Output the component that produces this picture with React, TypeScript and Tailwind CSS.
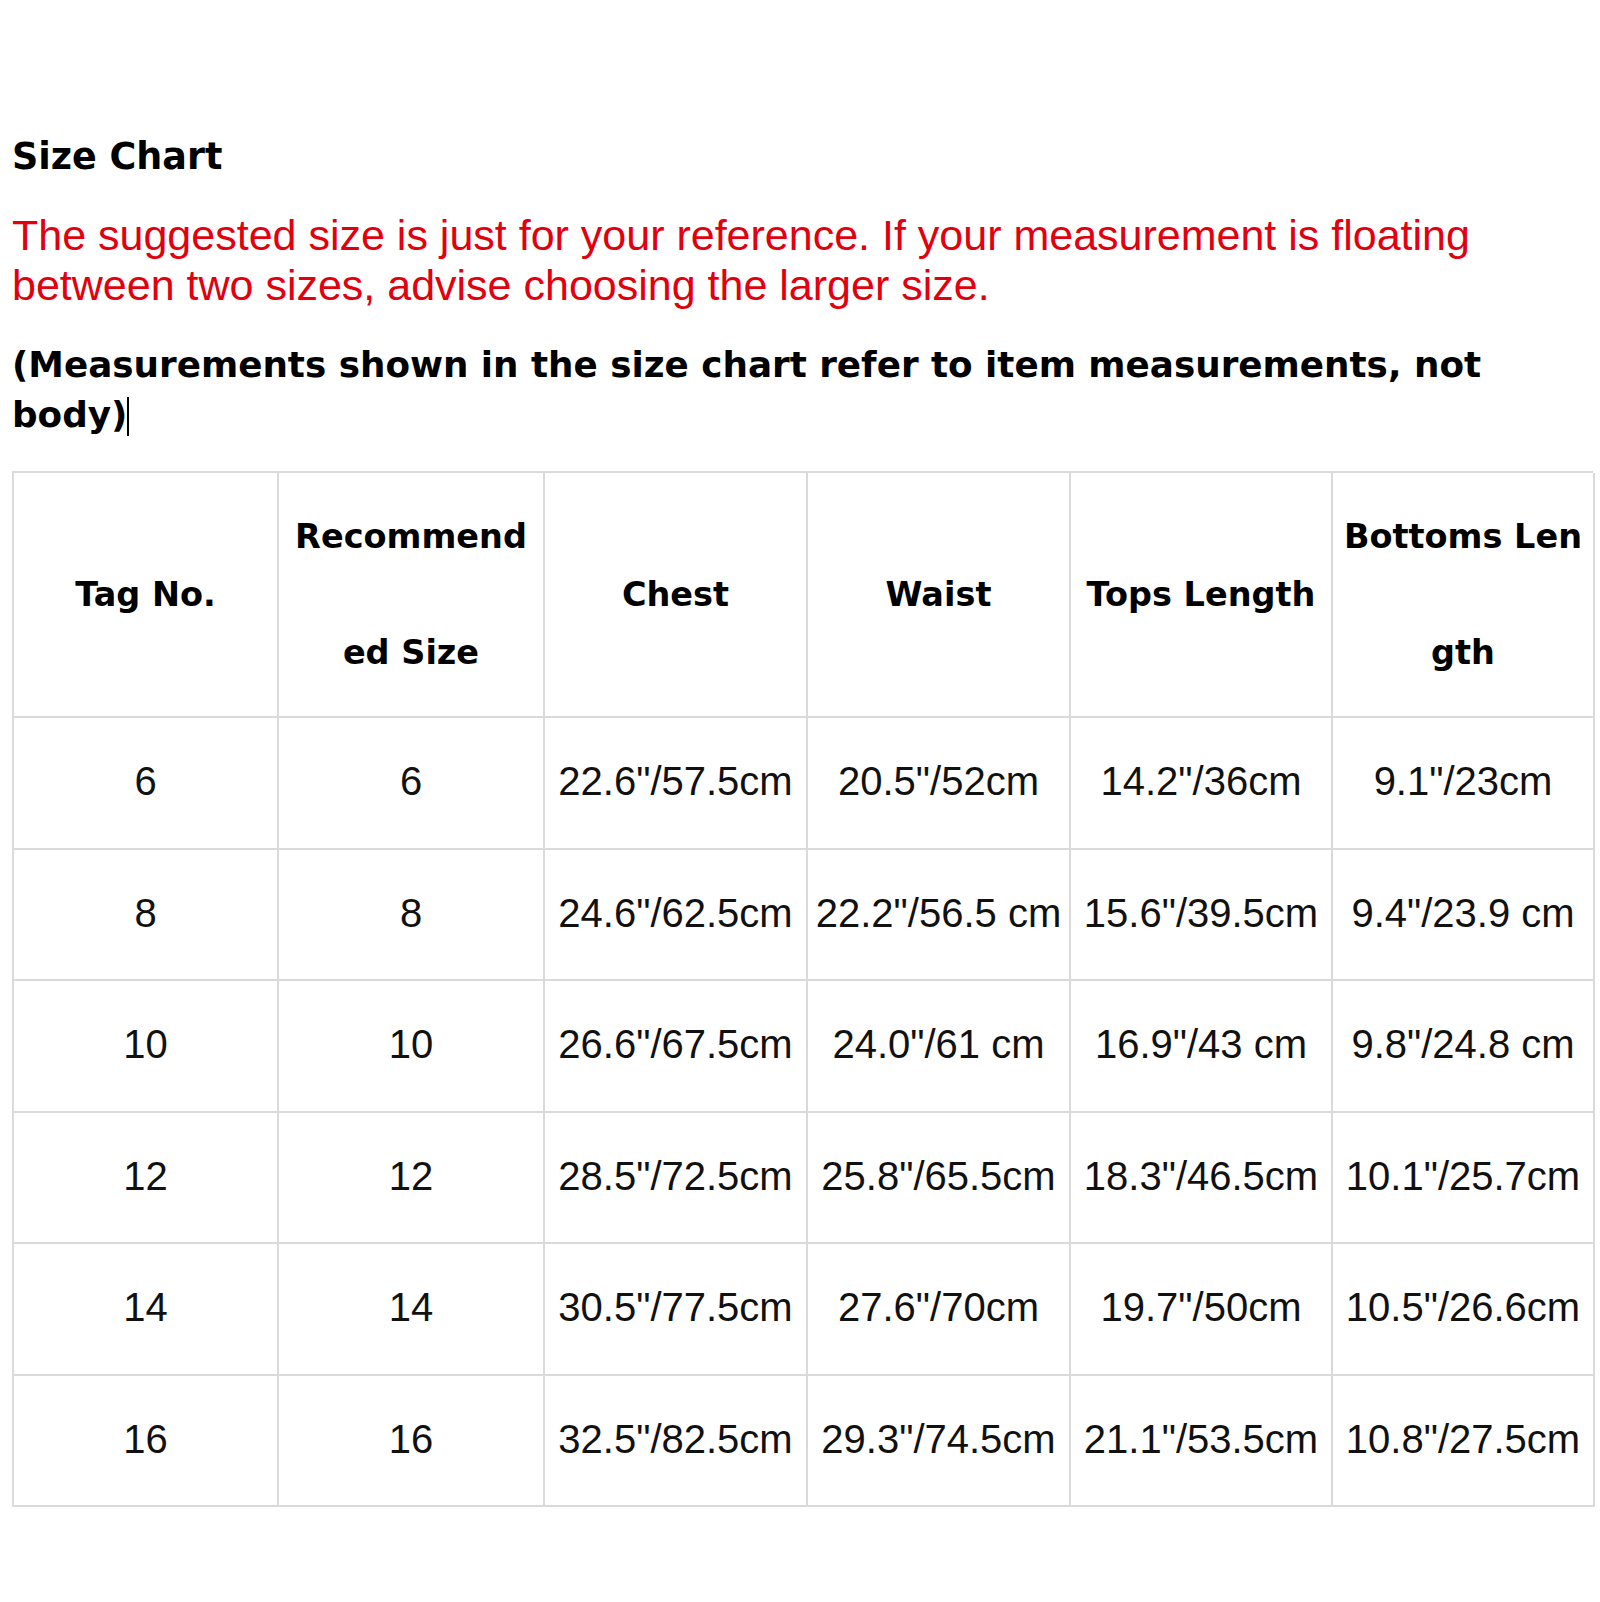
import React from "react";

const rows: string[][] = [
  ["6", "6", "22.6\"/57.5cm", "20.5\"/52cm", "14.2\"/36cm", "9.1\"/23cm"],
  ["8", "8", "24.6\"/62.5cm", "22.2\"/56.5 cm", "15.6\"/39.5cm", "9.4\"/23.9 cm"],
  ["10", "10", "26.6\"/67.5cm", "24.0\"/61 cm", "16.9\"/43 cm", "9.8\"/24.8 cm"],
  ["12", "12", "28.5\"/72.5cm", "25.8\"/65.5cm", "18.3\"/46.5cm", "10.1\"/25.7cm"],
  ["14", "14", "30.5\"/77.5cm", "27.6\"/70cm", "19.7\"/50cm", "10.5\"/26.6cm"],
  ["16", "16", "32.5\"/82.5cm", "29.3\"/74.5cm", "21.1\"/53.5cm", "10.8\"/27.5cm"],
];

function HeadCell({ children }: { children: React.ReactNode }) {
  return (
    <div className="h-[245px] border-r-2 border-b-2 border-[#dadada] flex items-center justify-center text-center font-['DejaVu_Sans',sans-serif] font-bold text-[33.5px] leading-[116px] text-black whitespace-nowrap">
      <div>{children}</div>
    </div>
  );
}

export default function App() {
  return (
    <div className="w-[1600px] min-h-[1602px] bg-white pl-[12px] pt-[132px]">
      <h1 className="font-['DejaVu_Sans',sans-serif] font-bold text-[36.5px] leading-[50px] text-black">
        Size Chart
      </h1>
      <p className="mt-[28px] w-[1540px] font-['Liberation_Sans',Arial,sans-serif] text-[43px] leading-[50px] text-[#e3000e]">
        The suggested size is just for your reference. If your measurement is floating between two sizes, advise choosing the larger size.
      </p>
      <p className="mt-[30px] w-[1540px] font-['DejaVu_Sans',sans-serif] font-bold text-[35.75px] leading-[50px] text-black">
        (Measurements shown in the size chart refer to item measurements, not body)
        <span className="inline-block w-[2px] h-[39px] bg-black align-[-9px]" />
      </p>
      <div className="mt-[31px] w-[1581px] grid grid-cols-[265px_266px_263px_263px_262px_262px] border-l-2 border-t-2 border-[#dadada]">
        <HeadCell>Tag No.</HeadCell>
        <HeadCell>
          Recommend
          <br />
          ed Size
        </HeadCell>
        <HeadCell>Chest</HeadCell>
        <HeadCell>Waist</HeadCell>
        <HeadCell>Tops Length</HeadCell>
        <HeadCell>
          Bottoms Len
          <br />
          gth
        </HeadCell>
        {rows.map((r, i) =>
          r.map((c, j) => (
            <div
              key={`${i}-${j}`}
              className="h-[131.5px] border-r-2 border-b-2 border-[#dadada] flex items-center justify-center pb-[3px] font-['Liberation_Sans',Arial,sans-serif] text-[40px] leading-none text-[#111] whitespace-nowrap"
            >
              {c}
            </div>
          ))
        )}
      </div>
    </div>
  );
}
